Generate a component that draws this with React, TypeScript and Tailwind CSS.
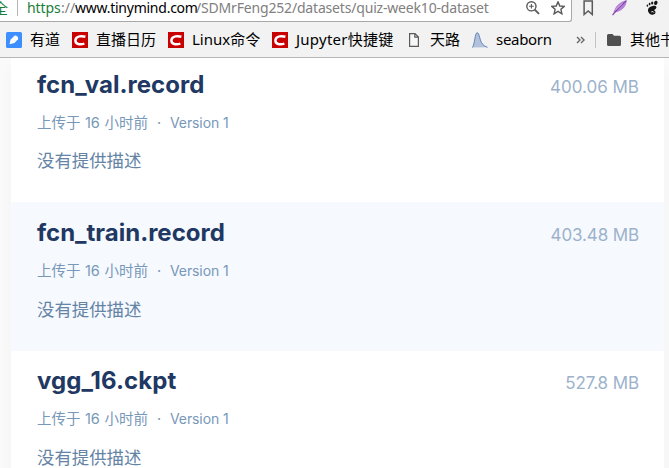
import React from 'react';

const files = [
  { name: 'fcn_val.record', size: '400.06 MB', row: 'h-[144px] pt-[11px] bg-white', title: 'tracking-[0.03px]', sizeTrack: 'tracking-[0px]', gap: 'mt-[14px]' },
  { name: 'fcn_train.record', size: '403.48 MB', row: 'h-[149px] pt-[15px] bg-[#f6f9fe]', title: 'tracking-[0px]', sizeTrack: 'tracking-[-0.12px]', gap: 'mt-[15px]' },
  { name: 'vgg_16.ckpt', size: '527.8 MB', row: 'h-[149px] pt-[14px] bg-white', title: 'tracking-[0.1px]', sizeTrack: 'tracking-[-0.1px]', gap: 'mt-[15px]' },
];

function CIcon() {
  return (
    <svg className="block size-4 shrink-0" viewBox="0 0 16 16">
      <rect width="16" height="16" fill="#c90000" />
      <path d="M13.4 4.7C10.5 3.9 3.7 3.4 3.4 8.4C3.2 12.5 8.2 12.8 12.4 11.6" fill="none" stroke="#fff" strokeWidth="2.5" />
    </svg>
  );
}

function YoudaoIcon() {
  return (
    <svg className="block size-4 shrink-0" viewBox="0 0 16 16">
      <rect width="16" height="16" rx="1.5" fill="#3d8eff" />
      <path d="M3.6 12.2L4.4 7.8L8.5 3.8Q9.8 3.2 11.3 4.6Q12.8 6 12 7.2L8.4 11Z" fill="#fff" />
    </svg>
  );
}

function PageIcon() {
  return (
    <svg className="block h-4 w-[10px] shrink-0" viewBox="0 0 10 16">
      <path d="M.6 1.6H6L9.4 5V14.4H.6ZM5.8 1.6V5.2H9.4" fill="#f7f7f7" stroke="#5a5a5a" strokeWidth="1.2" />
    </svg>
  );
}

function CurveIcon() {
  return (
    <svg className="block size-4 shrink-0" viewBox="0 0 16 16">
      <path d="M.5 15.5C2.7 12 3 1 5 .7C7.6 .5 7.5 9 10.5 12Q12.5 14.5 15.5 15.3Z" fill="#b2c2dc" />
      <path d="M.5 15.5C2.7 12 3 1 5 .7C7.6 .5 7.5 9 10.5 12Q12.5 14.5 15.5 15.3" fill="none" stroke="#6583b8" />
    </svg>
  );
}

function Bookmark({ icon, label, box, track }: { icon: React.ReactNode; label: string; box: string; track: string }) {
  return (
    <div className={`flex shrink-0 items-center gap-2 ${box}`}>
      {icon}
      <span className={`pb-[2px] whitespace-nowrap ${track}`}>{label}</span>
    </div>
  );
}

export default function App() {
  return (
    <div className="h-[468px] w-[669px] overflow-hidden bg-[#fafafa]">
      <header className="h-[58px] border-b border-[#b6b6b6] bg-[#f2f2f2] font-['Noto_Sans','Noto_Sans_CJK_SC',sans-serif]">
        <div className="flex h-[22px]">
          <div className="flex h-[22px] w-[572px] shrink-0 rounded-br-[3px] border-r border-b border-[#a8a8a8] bg-white text-[14px] leading-[16px]">
            <span className="-ml-[7px] w-[15px] shrink-0 text-[15px] text-[#188038]">全</span>
            <span className="ml-[9px] h-[16px] w-px shrink-0 bg-[#b5b5b5]" />
            <div className="ml-[9px] flex w-[499px] shrink-0 whitespace-nowrap text-[#808080]">
              <span className="w-[34px] tracking-[-0.1px] text-[#188038]">https</span>
              <span className="w-[14px]">://</span>
              <span className="w-[121px] tracking-[-0.25px] text-black">www.tinymind.com</span>
              <span className="tracking-[-0.18px]">/SDMrFeng252/datasets/quiz-week10-dataset</span>
            </div>
            <svg className="mt-px size-[14px] shrink-0" viewBox="0 0 14 14" fill="none" stroke="#5a5a5a">
              <circle cx="5.4" cy="5.3" r="4.6" strokeWidth="1.4" />
              <path d="M8.7 8.6L13 12.9" strokeWidth="1.9" />
              <path d="M3.1 5.3H7.7M5.4 3V7.6" strokeWidth="1.1" />
            </svg>
            <svg className="mt-px ml-[11px] size-[14px] shrink-0" viewBox="0 0 14 14">
              <path d="M7 .9L8.8 5L13.2 5.4L9.9 8.3L10.9 12.8L7 10.4L3.1 12.8L4.1 8.3L.8 5.4L5.2 5Z" fill="none" stroke="#5a5a5a" strokeWidth="1.4" />
            </svg>
          </div>
          <svg className="ml-[11px] h-4 w-[11px] shrink-0" viewBox="0 0 11 16">
            <path d="M1.1 .9H9.3V14.5L5.2 11L1.1 14.5Z" fill="none" stroke="#5a5a5a" strokeWidth="1.5" />
          </svg>
          <svg className="ml-[18px] size-4 shrink-0" viewBox="0 0 16 16">
            <path d="M1.5 13.5C2 8 7.2 1.3 14.6 .3C15 5.3 10.8 11 3.1 12.6Z" fill="#b57fd6" />
            <path d="M.5 15.2C4.8 9.6 9 5 14.4 .6" fill="none" stroke="#793ea5" strokeWidth="1.1" />
            <path d="M3.4 10L10.6 3.2" fill="none" stroke="#e2c8f0" strokeWidth=".8" />
          </svg>
          <svg className="ml-[17px] size-4 shrink-0" viewBox="0 0 16 16" fill="#151515">
            <ellipse cx="10.8" cy="2.9" rx="1.7" ry="2.2" transform="rotate(15 10.8 2.9)" />
            <ellipse cx="7.2" cy="3.1" rx="1.1" ry="1.5" />
            <ellipse cx="4.6" cy="4.1" rx=".9" ry="1.3" />
            <ellipse cx="2.4" cy="5.7" rx=".8" ry="1.1" />
            <path d="M7.6 5.9C11.6 5.2 12.6 7.8 10.2 9.2C9 9.9 8.8 10.2 10 11.1C11.5 12.8 9.4 15.4 6.8 14.7C2.6 13.6 .6 7.3 7.6 5.9Z" />
            <path d="M6.2 12Q8.4 10.6 9 12.7" fill="none" stroke="#f2f2f2" strokeWidth=".9" />
          </svg>
        </div>
        <div className="flex h-[35px] items-center pt-px pl-[6px] text-[15px] leading-[20px] text-black">
          <Bookmark icon={<YoudaoIcon />} label="有道" box="w-[66px]" track="" />
          <Bookmark icon={<CIcon />} label="直播日历" box="w-[96px]" track="" />
          <Bookmark icon={<CIcon />} label="Linux命令" box="w-[104px]" track="" />
          <Bookmark icon={<CIcon />} label="Jupyter快捷键" box="w-[137px]" track="tracking-[0.25px]" />
          <Bookmark icon={<PageIcon />} label="天路" box="w-[63px] gap-[11px]!" track="" />
          <Bookmark icon={<CurveIcon />} label="seaborn" box="w-[104px]" track="tracking-[-0.3px]" />
          <svg className="h-[8px] w-[9px] shrink-0" viewBox="0 0 9 8" fill="none" stroke="#666" strokeWidth="1.4">
            <path d="M1 1L4 4L1 7M5 1L8 4L5 7" />
          </svg>
          <span className="ml-[10px] h-4 w-px shrink-0 bg-[#c4c4c4]" />
          <svg className="ml-[11px] h-[12px] w-[14px] shrink-0" viewBox="0 0 14 12">
            <path d="M1.5 0H5.5L7 1.7H12.5Q14 1.7 14 3.2V10.5Q14 12 12.5 12H1.5Q0 12 0 10.5V1.5Q0 0 1.5 0Z" fill="#505050" />
          </svg>
          <span className="ml-[9px] pb-[2px] whitespace-nowrap">其他书</span>
        </div>
      </header>
      <main className="ml-[11px] w-[653px] bg-white font-['Inter','Noto_Sans_CJK_SC',sans-serif] shadow-[0_10px_16px_rgba(0,0,0,0.03)]">
        {files.map((f) => (
          <section key={f.name} className={`flex justify-between pr-[25px] pl-[26px] ${f.row}`}>
            <div className="-mt-px whitespace-nowrap">
              <h2 className={`mt-px h-[32px] text-[24px] leading-[32px] font-bold text-[#203862] ${f.title}`}>{f.name}</h2>
              <div className="mt-[11px] flex h-[22px] text-[14.5px] leading-[22px] text-[#7898b9]">
                <span className="w-[111px]">
                  上传于 <span className="mr-px ml-[0.5px] text-[14.5px] tracking-[-0.3px]">16</span> 小时前
                </span>
                <span className="w-[22px] text-center">·</span>
                <span className="text-[14px] tracking-[-0.1px]">Version 1</span>
              </div>
              <p className={`h-[26px] text-[17.4px] leading-[26px] text-[#6483a5] ${f.gap}`}>没有提供描述</p>
            </div>
            <span className={`mt-[5px] text-[17px] leading-[26px] whitespace-nowrap text-[#9cb2cb] ${f.sizeTrack}`}>{f.size}</span>
          </section>
        ))}
      </main>
    </div>
  );
}
